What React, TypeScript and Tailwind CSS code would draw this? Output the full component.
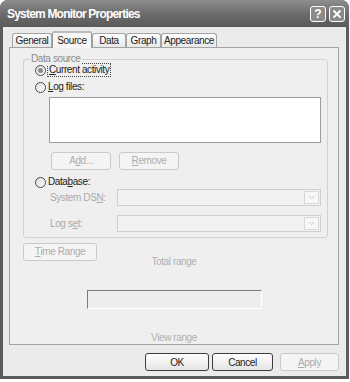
import { ChevronDown } from "lucide-react"

const font = { fontFamily: '"Liberation Sans", Arial, sans-serif' }

function Radio({ checked }: { checked?: boolean }) {
  return (
    <span className="w-[11px] h-[11px] rounded-full border border-[#4a4a4a] bg-gradient-to-br from-[#dcdcdc] to-white flex items-center justify-center shrink-0">
      {checked && <span className="w-[5px] h-[5px] rounded-full bg-[#8a8a8a]" />}
    </span>
  )
}

function Tab({ label, w, selected }: { label: string; w: number; selected?: boolean }) {
  if (selected) {
    return (
      <div
        style={{ width: w }}
        className="relative z-10 -mb-px h-[17px] rounded-t-[3px] border border-b-0 border-[#9a9a9a] bg-[#f6f6f6] flex items-center justify-center text-[10px] tracking-[-0.4px] text-[#222]"
      >
        <div className="absolute -top-px left-0 right-0 h-[2px] rounded-t-[3px] bg-[#bdbdbd]" />
        {label}
      </div>
    )
  }
  return (
    <div
      style={{ width: w }}
      className="h-[14px] rounded-t-[3px] border border-b-0 border-[#a3a3a3] bg-gradient-to-b from-white to-[#e8e8e8] flex items-center justify-center text-[10px] tracking-[-0.4px] text-[#222]"
    >
      {label}
    </div>
  )
}

function Combo() {
  return (
    <div className="w-[204px] h-[17px] border border-[#cfcfcf] bg-[#f2f2f2] flex justify-end p-px">
      <div className="w-[15px] h-full border border-[#d8d8d8] bg-[#f7f7f7] flex items-center justify-center">
        <ChevronDown size={9} strokeWidth={2} color="#b8b8b8" />
      </div>
    </div>
  )
}

function Btn({ children, w, disabled }: { children: React.ReactNode; w: number; disabled?: boolean }) {
  return (
    <div
      style={{ width: w }}
      className={
        disabled
          ? "h-[18px] rounded-[3px] border border-[#c9c9c9] bg-[#f4f4f4] flex items-center justify-center text-[10px] tracking-[-0.4px] text-[#adadad]"
          : "h-[18px] rounded-[3px] border border-[#3c3c3c] bg-gradient-to-b from-white to-[#e4e4e4] flex items-center justify-center text-[10px] tracking-[-0.4px] text-[#222]"
      }
    >
      {children}
    </div>
  )
}

export default function App() {
  return (
    <div className="w-[350px] h-[382px] bg-white" style={font}>
      <div className="w-[349px] h-[379px] rounded-t-[8px] bg-[#5c5c5c] flex flex-col overflow-hidden">
        {/* title bar */}
        <div className="h-[27px] flex items-center justify-between pl-[7px] pr-[4px] bg-gradient-to-b from-[#8f8f8f] via-[#6c6c6c] to-[#5a5a5a]">
          <span className="text-white font-bold text-[12px] tracking-[-0.8px]">System Monitor Properties</span>
          <div className="flex gap-[3px] mt-[1px]">
            <div className="w-[16px] h-[16px] rounded-[3px] border border-white bg-[#8a8a8a] flex items-center justify-center text-white font-bold text-[12px] leading-none">?</div>
            <div className="w-[16px] h-[16px] rounded-[3px] border border-white bg-[#8a8a8a] flex items-center justify-center">
              <svg width="10" height="10" viewBox="0 0 10 10">
                <path d="M1.5 1.5 L8.5 8.5 M8.5 1.5 L1.5 8.5" stroke="white" strokeWidth="1.8" />
              </svg>
            </div>
          </div>
        </div>

        {/* body */}
        <div className="mx-[3px] h-[349px] bg-[#ebebeb] pl-[6px] pr-[7px]">
          <div className="flex items-end h-[16px] mt-[4px] ml-[3px]">
            <Tab label="General" w={40} />
            <Tab label="Source" w={40} selected />
            <Tab label="Data" w={34} />
            <Tab label="Graph" w={35} />
            <Tab label="Appearance" w={56} />
          </div>

          {/* panel */}
          <div className="h-[298px] border border-[#a3a3a3] bg-[#efefef] overflow-hidden text-[10px] tracking-[-0.4px] leading-[12px]">
            {/* Data source group */}
            <div className="relative mt-[11px] ml-[13px] mr-[10px] h-[179px] rounded-[3px] border border-[#d2d2d2] pt-[3px] pl-[11px] pr-[5px]">
              <span className="absolute -top-[7px] left-[6px] px-[1px] bg-[#efefef] text-[#8a8a8a]">Data source</span>

              <div className="flex items-center h-[14px] gap-[1px]">
                <Radio checked />
                <span className="border border-dotted border-[#444] px-[1px] h-[14px] flex items-center text-[#222]">
                  <u>C</u>urrent activity
                </span>
              </div>
              <div className="flex items-center h-[14px] gap-[2px] mt-[3px]">
                <Radio />
                <span className="text-[#222]">
                  <u>L</u>og files:
                </span>
              </div>
              <div className="mt-[3px] ml-[14px] w-[272px] h-[46px] border border-[#9c9c9c] bg-white" />

              <div className="flex mt-[9px] ml-[16px] gap-[8px]">
                <Btn w={60} disabled>
                  A<u>d</u>d...
                </Btn>
                <Btn w={60} disabled>
                  <u>R</u>emove
                </Btn>
              </div>

              <div className="flex items-center h-[14px] gap-[2px] mt-[5px]">
                <Radio />
                <span className="text-[#222]">
                  Data<u>b</u>ase:
                </span>
              </div>
              <div className="flex items-center ml-[15px] h-[17px]">
                <span className="w-[67px] text-[#ababab]">
                  System DS<u>N</u>:
                </span>
                <Combo />
              </div>
              <div className="flex items-center ml-[15px] h-[17px] mt-[9px]">
                <span className="w-[67px] text-[#ababab]">
                  Log s<u>e</u>t:
                </span>
                <Combo />
              </div>
            </div>

            <div className="mt-[5px] ml-[13px]">
              <Btn w={74} disabled>
                <u>T</u>ime Range
              </Btn>
            </div>
            <div className="-mt-[5px] text-center text-[#b0b0b0]">Total range</div>
            <div className="mt-[22px] mx-auto w-[175px] h-[19px] border border-t-[#7c7c7c] border-l-[#7c7c7c] border-b-white border-r-white bg-[#ededed]" />
            <div className="mt-[23px] text-center text-[#b0b0b0]">View range</div>
          </div>

          {/* dialog buttons */}
          <div className="flex justify-end mt-[8px]">
            <Btn w={64}>OK</Btn>
            <div className="w-[3px]" />
            <Btn w={61}>Cancel</Btn>
            <div className="w-[7px]" />
            <Btn w={59} disabled>
              <u>A</u>pply
            </Btn>
          </div>
        </div>
      </div>
    </div>
  )
}
